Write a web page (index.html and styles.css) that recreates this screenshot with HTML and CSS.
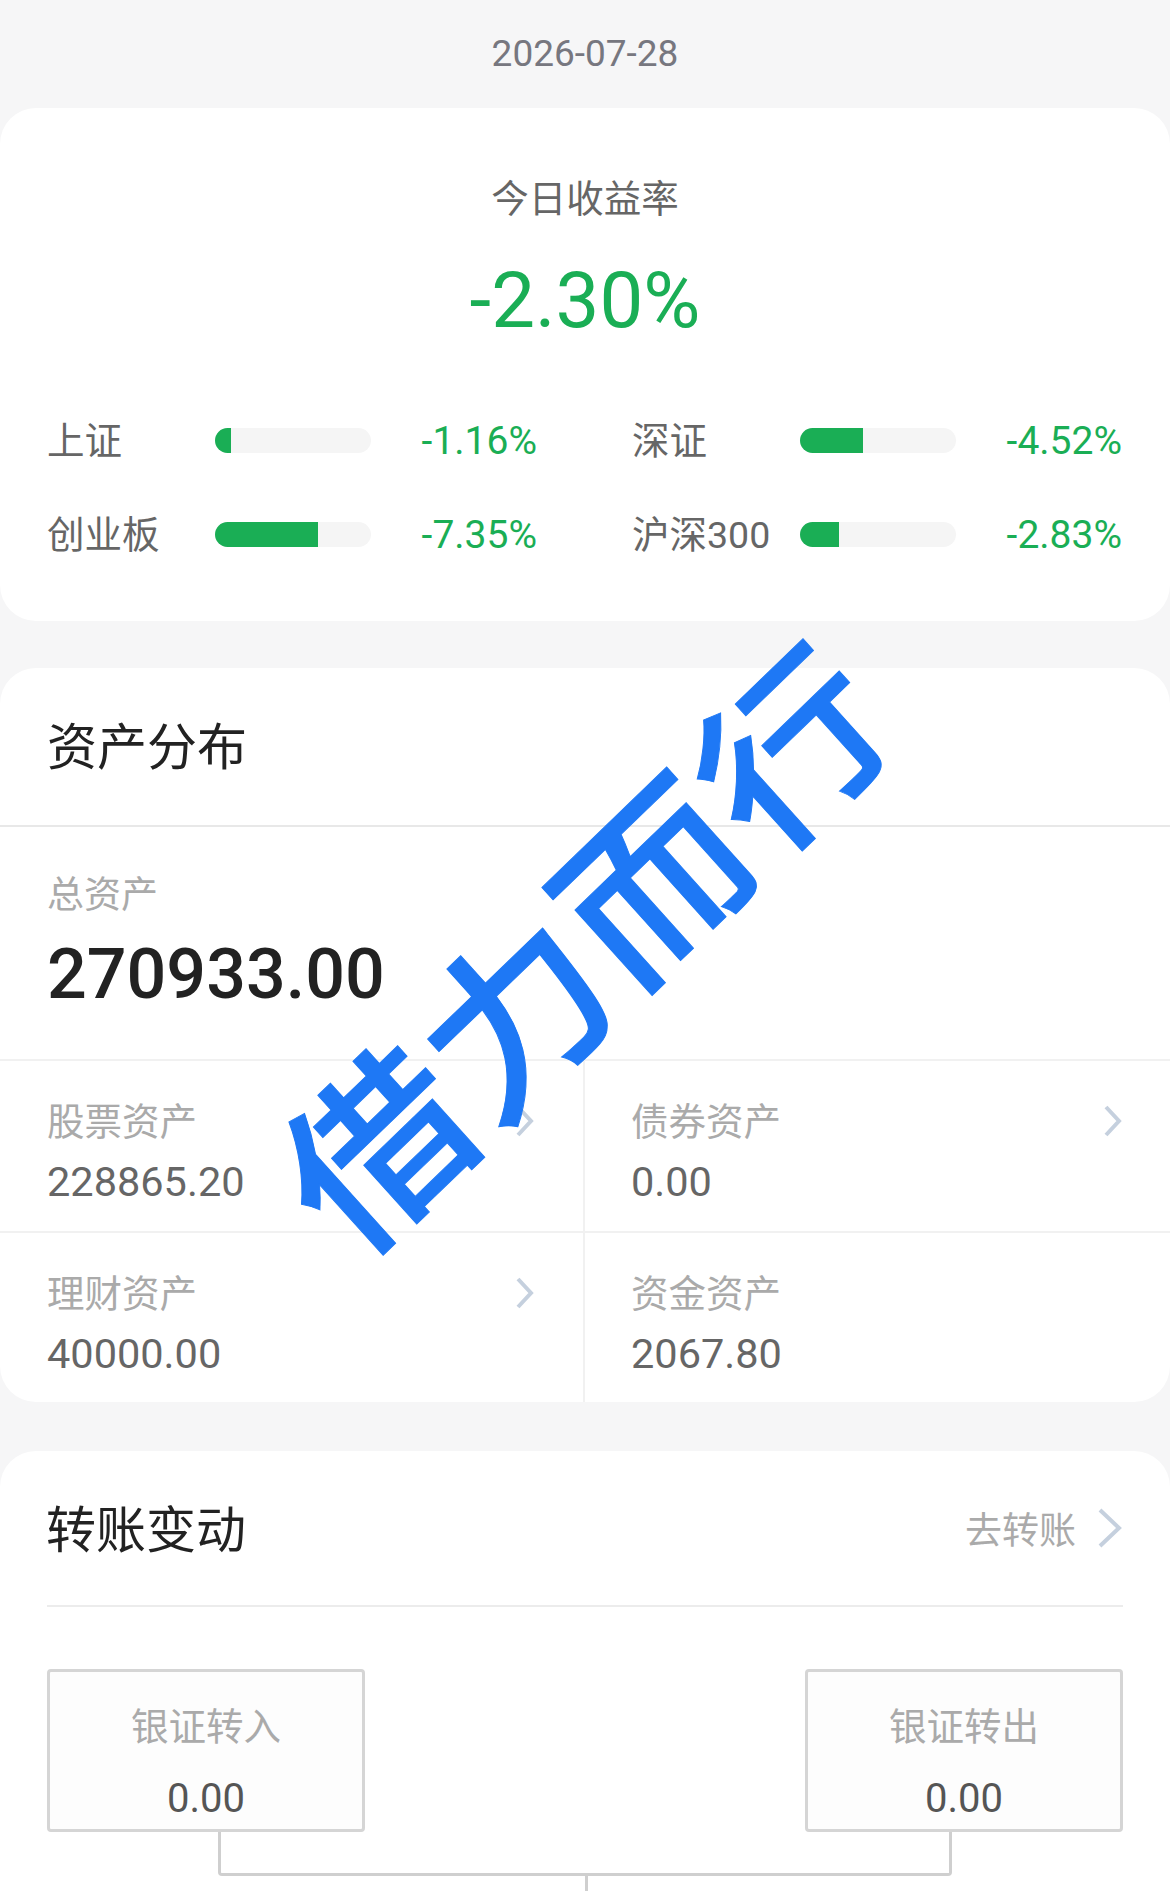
FILE: index.html
```html
<!DOCTYPE html>
<html lang="zh-CN">
  <head>
    <meta charset="UTF-8" />
    <meta name="viewport" content="width=device-width, initial-scale=1.0" />
    <title>今日收益率</title>
    <link rel="stylesheet" href="styles.css">
  </head>
  <body>
    <div class="page">
      <div class="date">2026-07-28</div>

      <div class="card today">
        <div class="today-title">今日收益率</div>
        <div class="today-rate">-2.30%</div>
        <div class="index-grid">
          <div class="index-item">
            <span class="index-name">上证</span>
            <span class="bar"><span class="bar-fill" style="width: 16px"></span></span>
            <span class="index-value">-1.16%</span>
          </div>
          <div class="index-item">
            <span class="index-name">深证</span>
            <span class="bar"><span class="bar-fill" style="width: 63px"></span></span>
            <span class="index-value">-4.52%</span>
          </div>
          <div class="index-item">
            <span class="index-name">创业板</span>
            <span class="bar"><span class="bar-fill" style="width: 103px"></span></span>
            <span class="index-value">-7.35%</span>
          </div>
          <div class="index-item">
            <span class="index-name">沪深300</span>
            <span class="bar"><span class="bar-fill" style="width: 39px"></span></span>
            <span class="index-value">-2.83%</span>
          </div>
        </div>
      </div>

      <div class="card assets">
        <div class="assets-title">资产分布</div>
        <div class="total">
          <div class="total-label">总资产</div>
          <div class="total-value">270933.00</div>
        </div>
        <div class="asset-grid">
          <div class="asset-cell">
            <div>
              <div class="asset-label">股票资产</div>
              <div class="asset-value">228865.20</div>
            </div>
            <svg class="chevron" viewBox="0 0 19 32"><path d="M3 2l13 14L3 30" /></svg>
          </div>
          <div class="asset-cell">
            <div>
              <div class="asset-label">债券资产</div>
              <div class="asset-value">0.00</div>
            </div>
            <svg class="chevron" viewBox="0 0 19 32"><path d="M3 2l13 14L3 30" /></svg>
          </div>
          <div class="asset-cell">
            <div>
              <div class="asset-label">理财资产</div>
              <div class="asset-value">40000.00</div>
            </div>
            <svg class="chevron" viewBox="0 0 19 32"><path d="M3 2l13 14L3 30" /></svg>
          </div>
          <div class="asset-cell">
            <div>
              <div class="asset-label">资金资产</div>
              <div class="asset-value">2067.80</div>
            </div>
          </div>
        </div>
      </div>

      <div class="card transfer">
        <div class="transfer-head">
          <div class="transfer-title">转账变动</div>
          <div class="transfer-link">
            去转账
            <svg class="chevron-big" viewBox="0 0 25 40"><path d="M2 2l19 18L2 38" /></svg>
          </div>
        </div>
        <div class="transfer-boxes">
          <div class="transfer-box">
            <div class="box-label">银证转入</div>
            <div class="box-value">0.00</div>
          </div>
          <div class="transfer-box">
            <div class="box-label">银证转出</div>
            <div class="box-value">0.00</div>
          </div>
        </div>
        <div class="connector"></div>
        <div class="connector-stem"></div>
      </div>

      <div class="watermark">借力而行</div>
    </div>
  </body>
</html>
```

FILE: styles.css
```css
* {
  box-sizing: border-box;
}
body {
  margin: 0;
  background: #f6f6f7;
  font-family: Roboto, "Noto Sans CJK SC", sans-serif;
}
.page {
  position: relative;
  width: 1170px;
  height: 1891px;
  overflow: hidden;
}
.date {
  height: 108px;
  padding-top: 29px;
  line-height: 50px;
  font-size: 37px;
  color: #77777f;
  text-align: center;
}
.card {
  background: #fff;
  border-radius: 36px;
}

/* today */
.today {
  height: 513px;
  padding: 66px 47px 0;
  margin-bottom: 47px;
}
.today-title {
  line-height: 50px;
  font-size: 37.5px;
  color: #666;
  text-align: center;
}
.today-rate {
  margin-top: 32px;
  line-height: 90px;
  font-size: 78px;
  color: #1aae55;
  text-align: center;
}
.index-grid {
  display: grid;
  grid-template-columns: 490px 490px;
  gap: 44px 95px;
  margin-top: 69px;
}
.index-item {
  display: flex;
  align-items: center;
  height: 50px;
}
.index-name {
  width: 168px;
  margin-top: -5px;
  font-size: 37.5px;
  color: #666;
  white-space: nowrap;
}
.bar {
  width: 156px;
  height: 25px;
  border-radius: 13px;
  background: #f5f5f5;
  overflow: hidden;
}
.bar-fill {
  display: block;
  height: 100%;
  background: #1aae55;
}
.index-value {
  flex: 1;
  margin-top: 2px;
  font-size: 39px;
  color: #1aae55;
  text-align: right;
}

/* assets */
.assets {
  height: 734px;
  margin-bottom: 49px;
  overflow: hidden;
}
.assets-title {
  height: 159px;
  padding: 0 47px;
  border-bottom: 2px solid #e8e8e8;
  line-height: 160px;
  font-size: 50px;
  color: #222;
}
.total {
  height: 234px;
  padding: 44px 47px 0;
  border-bottom: 2px solid #f1f1f1;
}
.total-label {
  line-height: 50px;
  font-size: 37px;
  color: #aaa;
}
.total-value {
  margin-top: 8px;
  line-height: 90px;
  font-size: 70px;
  font-weight: 500;
  color: #222;
}
.asset-grid {
  display: grid;
  grid-template-columns: 585px 585px;
  grid-template-rows: 172px 169px;
}
.asset-cell {
  display: flex;
  justify-content: space-between;
  align-items: flex-start;
  padding: 36px 48px 0 47px;
  border-bottom: 2px solid #f1f1f1;
}
.asset-cell:nth-child(odd) {
  border-right: 2px solid #f1f1f1;
  padding-right: 49px;
}
.asset-cell:nth-child(even) {
  padding-left: 46px;
}
.asset-cell:nth-child(n+3) {
  border-bottom: none;
}
.asset-label {
  line-height: 50px;
  font-size: 37.5px;
  color: #aaa;
}
.asset-value {
  margin-top: 7px;
  line-height: 56px;
  font-size: 41.5px;
  color: #666;
}
.chevron {
  width: 19px;
  height: 32px;
  margin-top: 8px;
}
.chevron path,
.chevron-big path {
  fill: none;
  stroke: #c5d0de;
  stroke-width: 4;
}

/* transfer */
.transfer {
  height: 500px;
  padding: 0 47px;
}
.transfer-head {
  display: flex;
  justify-content: space-between;
  align-items: center;
  height: 156px;
  border-bottom: 2px solid #ececec;
}
.transfer-title {
  margin: -5px 0 0 -1px;
  font-size: 50px;
  color: #222;
}
.transfer-link {
  display: flex;
  align-items: center;
  gap: 22px;
  font-size: 37px;
  color: #aaa;
}
.chevron-big {
  width: 25px;
  height: 40px;
}
.transfer-boxes {
  display: flex;
  justify-content: space-between;
  margin-top: 62px;
}
.transfer-box {
  width: 318px;
  height: 163px;
  padding-top: 30px;
  border: 3px solid #d5d5d5;
  border-radius: 4px;
  background: #fdfdfd;
  text-align: center;
}
.box-label {
  line-height: 50px;
  font-size: 37.5px;
  color: #aaa;
}
.box-value {
  margin-top: 19px;
  line-height: 56px;
  font-size: 40px;
  color: #555;
}
.connector {
  height: 44px;
  margin: 0 171px;
  border: 3px solid #cfcfcf;
  border-top: none;
  border-radius: 0 0 4px 4px;
}
.connector-stem {
  width: 3px;
  height: 60px;
  margin: 0 auto;
  transform: translateX(1px);
  background: #cfcfcf;
}

/* stamp across the middle of the page */
.watermark {
  position: absolute;
  left: 578px;
  top: 942px;
  font-size: 190px;
  line-height: 1;
  font-weight: 500;
  font-family: "Noto Sans CJK SC", sans-serif;
  color: #1e78f5;
  white-space: nowrap;
  -webkit-text-stroke: 1px #1e78f5;
  transform: translate(-50%, -50%) rotate(-44deg) skewX(-2deg) scale(1.01, 0.92);
}
```
